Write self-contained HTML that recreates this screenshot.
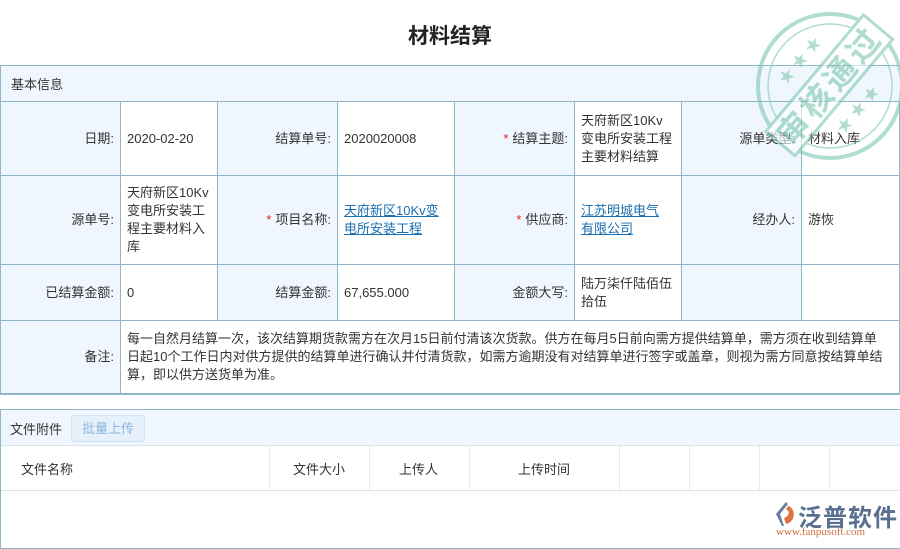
<!DOCTYPE html>
<html><head><meta charset="utf-8"><style>
*{margin:0;padding:0;box-sizing:border-box}
body{width:900px;height:547px;background:#fff;font-family:"Liberation Sans","Noto Sans CJK SC",sans-serif;font-size:13px;color:#333;position:relative;overflow:hidden}
.a{position:absolute}
.c{position:absolute;border-right:1px solid #8fb6c8;border-bottom:1px solid #8fb6c8;display:flex;align-items:center;line-height:18px;padding:0 3px 0 6px;white-space:nowrap}
.l{background:#f0f6fd;justify-content:flex-end;padding-right:6px}
.v{background:#fff}
.r{color:#e02020;margin-right:4px}
a{color:#1a6fb0;text-decoration:underline}
</style></head><body>
<div class="a" style="left:0;top:20px;width:900px;text-align:center;font-size:21px;font-weight:bold;color:#222">材料结算</div>
<div class="a" style="left:0;top:65px;width:900px;height:330px;border:1px solid #8fb6c8;border-right:none"></div>
<div class="a" style="left:1px;top:66px;width:899px;height:36px;background:#f0f6fd;border-bottom:1px solid #8fb6c8;padding:8px 10px">基本信息</div>
<div class="c l" style="left:1px;top:102px;width:120px;height:74px">日期:</div>
<div class="c v" style="left:121px;top:102px;width:97px;height:74px">2020-02-20</div>
<div class="c l" style="left:218px;top:102px;width:120px;height:74px">结算单号:</div>
<div class="c v" style="left:338px;top:102px;width:117px;height:74px">2020020008</div>
<div class="c l" style="left:455px;top:102px;width:120px;height:74px"><span class="r">*</span>结算主题:</div>
<div class="c v" style="left:575px;top:102px;width:107px;height:74px">天府新区10Kv<br>变电所安装工程<br>主要材料结算</div>
<div class="c l" style="left:682px;top:102px;width:120px;height:74px">源单类型:</div>
<div class="c v" style="left:802px;top:102px;width:98px;height:74px">材料入库</div>
<div class="c l" style="left:1px;top:176px;width:120px;height:89px">源单号:</div>
<div class="c v" style="left:121px;top:176px;width:97px;height:89px">天府新区10Kv<br>变电所安装工<br>程主要材料入<br>库</div>
<div class="c l" style="left:218px;top:176px;width:120px;height:89px"><span class="r">*</span>项目名称:</div>
<div class="c v" style="left:338px;top:176px;width:117px;height:89px"><a>天府新区10Kv变<br>电所安装工程</a></div>
<div class="c l" style="left:455px;top:176px;width:120px;height:89px"><span class="r">*</span>供应商:</div>
<div class="c v" style="left:575px;top:176px;width:107px;height:89px"><a>江苏明城电气<br>有限公司</a></div>
<div class="c l" style="left:682px;top:176px;width:120px;height:89px">经办人:</div>
<div class="c v" style="left:802px;top:176px;width:98px;height:89px">游恢</div>
<div class="c l" style="left:1px;top:265px;width:120px;height:56px">已结算金额:</div>
<div class="c v" style="left:121px;top:265px;width:97px;height:56px">0</div>
<div class="c l" style="left:218px;top:265px;width:120px;height:56px">结算金额:</div>
<div class="c v" style="left:338px;top:265px;width:117px;height:56px">67,655.000</div>
<div class="c l" style="left:455px;top:265px;width:120px;height:56px">金额大写:</div>
<div class="c v" style="left:575px;top:265px;width:107px;height:56px">陆万柒仟陆佰伍<br>拾伍</div>
<div class="c l" style="left:682px;top:265px;width:120px;height:56px"></div>
<div class="c v" style="left:802px;top:265px;width:98px;height:56px"></div>
<div class="c l" style="left:1px;top:321px;width:120px;height:73px">备注:</div>
<div class="c v" style="left:121px;top:321px;width:779px;height:73px;padding-right:10px">每一自然月结算一次，该次结算期货款需方在次月15日前付清该次货款。供方在每月5日前向需方提供结算单，需方须在收到结算单<br>日起10个工作日内对供方提供的结算单进行确认并付清货款，如需方逾期没有对结算单进行签字或盖章，则视为需方同意按结算单结<br>算，即以供方送货单为准。</div>
<div class="a" style="left:0;top:409px;width:900px;height:140px;border:1px solid #8fb6c8;border-right:none"></div>
<div class="a" style="left:1px;top:410px;width:899px;height:36px;background:#f0f6fd;border-bottom:1px solid #dde3ea"></div>
<div class="a" style="left:10px;top:419px">文件附件</div>
<div class="a" style="left:71px;top:415px;width:74px;height:27px;border:1px solid #cfe2f3;background:#e6f1fb;border-radius:3px;color:#8ab8e0;text-align:center;line-height:25px">批量上传</div>
<div class="a" style="left:1px;top:446px;width:899px;height:45px;border-bottom:1px solid #e2e2e2"></div>
<div class="a" style="left:269px;top:446px;height:45px;border-left:1px solid #e8e8e8"></div>
<div class="a" style="left:369px;top:446px;height:45px;border-left:1px solid #e8e8e8"></div>
<div class="a" style="left:469px;top:446px;height:45px;border-left:1px solid #e8e8e8"></div>
<div class="a" style="left:619px;top:446px;height:45px;border-left:1px solid #e8e8e8"></div>
<div class="a" style="left:689px;top:446px;height:45px;border-left:1px solid #e8e8e8"></div>
<div class="a" style="left:759px;top:446px;height:45px;border-left:1px solid #e8e8e8"></div>
<div class="a" style="left:829px;top:446px;height:45px;border-left:1px solid #e8e8e8"></div>
<div class="a" style="left:21px;top:459px">文件名称</div>
<div class="a" style="left:293px;top:459px">文件大小</div>
<div class="a" style="left:399px;top:459px">上传人</div>
<div class="a" style="left:518px;top:459px">上传时间</div>
<svg class="a" style="left:772px;top:500px" width="26" height="28" viewBox="0 0 26 28"><path d="M14 2 L4 14 L10 26 L12 26 L8 14 L16 4Z" fill="#6a7fa0"/><path d="M16 6 C24 8 24 22 14 24 L12 18 C18 16 18 10 14 10Z" fill="#e07040"/></svg>
<div class="a" style="left:798px;top:498px;font-size:24px;color:#5a6f90;font-weight:bold;letter-spacing:1px">泛普软件</div>
<div class="a" style="left:776px;top:526px;font-size:11px;color:#d07040;font-family:'Liberation Serif',serif">www.fanpusoft.com</div>
<svg class="a" style="left:750px;top:8px;opacity:.6" width="160" height="160" viewBox="0 0 160 160">
<circle cx="80" cy="78" r="72" fill="none" stroke="#7cc8b0" stroke-width="4"/>
<circle cx="80" cy="78" r="62" fill="none" stroke="#7cc8b0" stroke-width="1.5"/>
<g transform="rotate(-50 80 78)"><rect x="4" y="58" width="152" height="38" fill="#fff" stroke="#7cc8b0" stroke-width="3"/>
<text x="80" y="89" text-anchor="middle" font-size="32" font-weight="bold" fill="#7cc8b0" font-family="Noto Sans CJK SC,sans-serif" letter-spacing="4">审核通过</text>
<text x="80" y="44" text-anchor="middle" font-size="16" fill="#7cc8b0">★ ★ ★</text>
<text x="80" y="120" text-anchor="middle" font-size="16" fill="#7cc8b0">★ ★ ★</text></g>
</svg>
</body></html>
